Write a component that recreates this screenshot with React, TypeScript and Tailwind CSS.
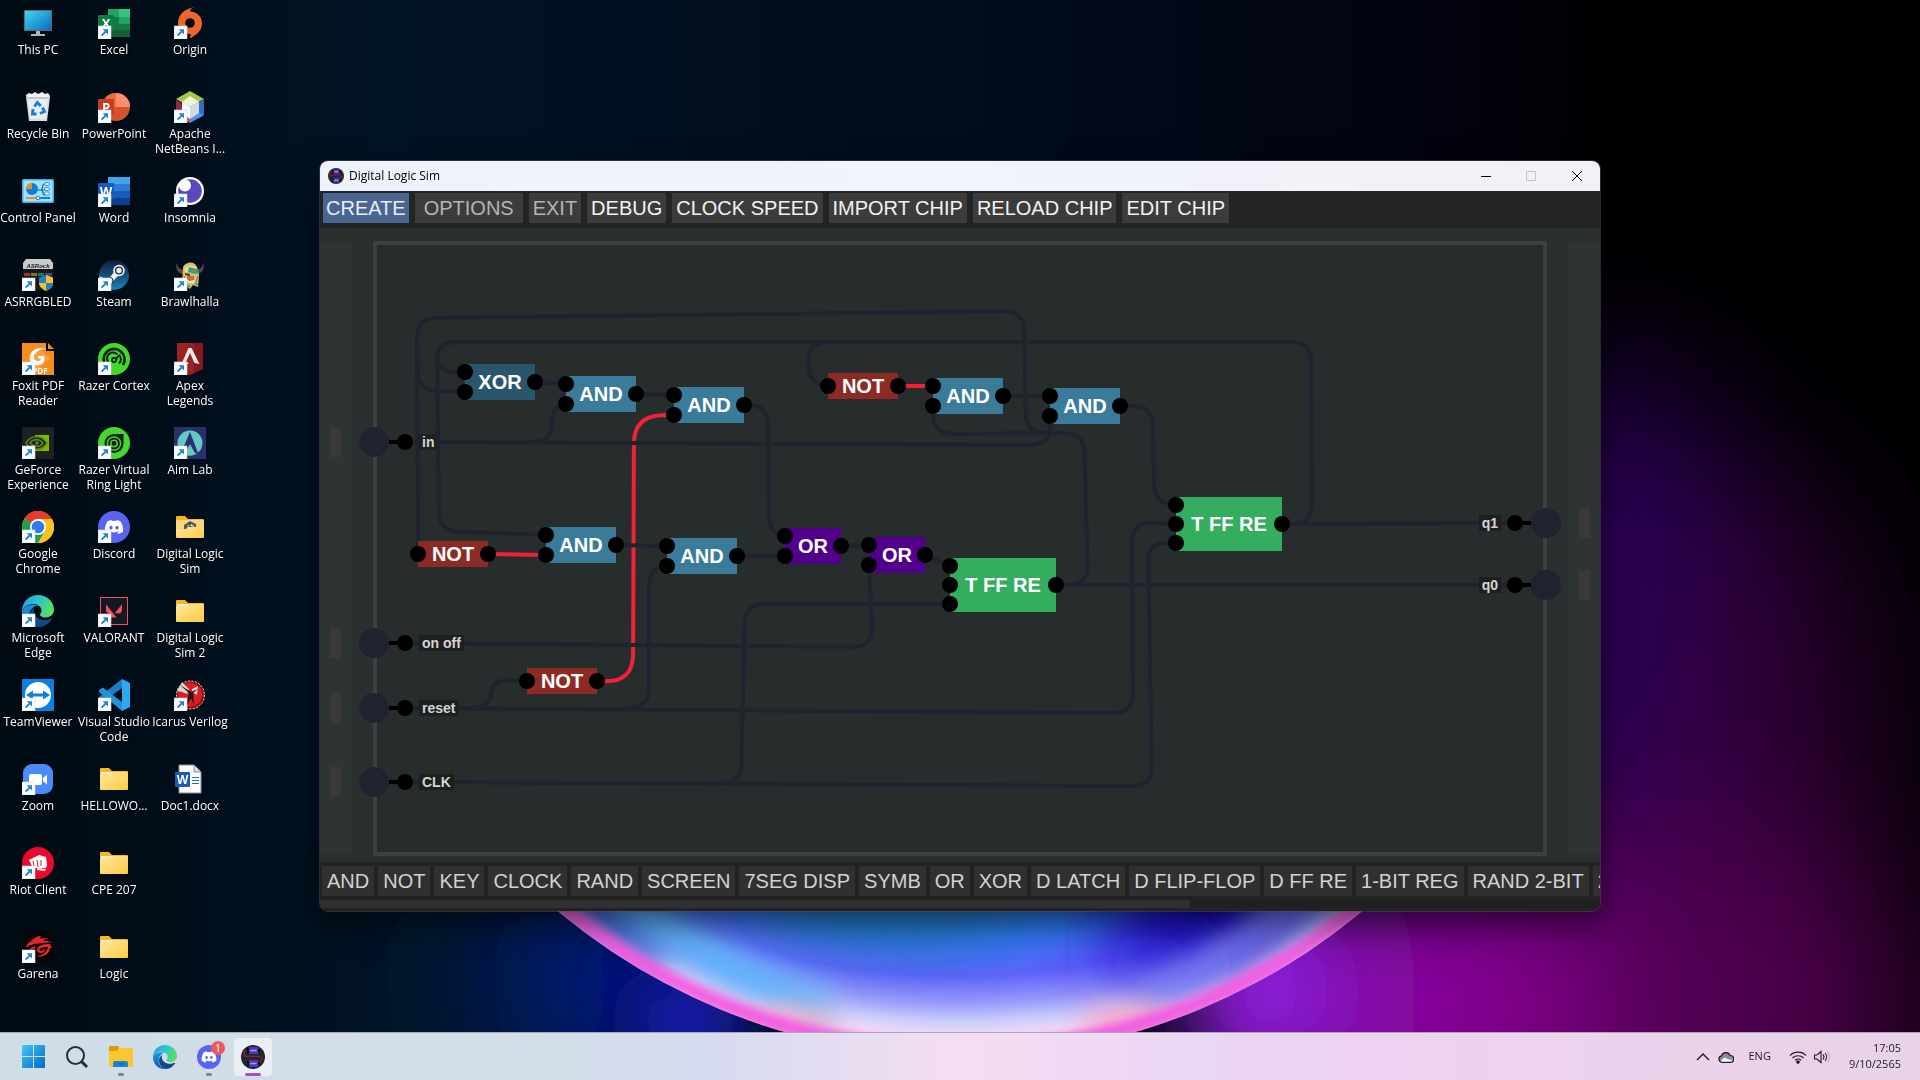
import React from "react";
import type { ReactNode } from "react";
import { FaDiscord } from "react-icons/fa";
import { SiNvidia, SiValorant } from "react-icons/si";

/* ---------- Desktop icons ---------- */

function Glyph({ children, shortcut = true }: { children: ReactNode; shortcut?: boolean }) {
  return (
    <svg viewBox="0 0 32 32" className="size-8" aria-hidden="true">
      {children}
      {shortcut && (
        <g>
          <rect x="0" y="19" width="13" height="13" fill="#fdfdfe" stroke="#cfd8e4" strokeWidth=".6" />
          <path d="M3.6 28.6 L8.4 23.8" stroke="#1b84d6" strokeWidth="1.9" />
          <path d="M4.6 22.2 H10 V27.6 L8.2 25.8 L6.4 24 Z" fill="#1b84d6" />
        </g>
      )}
    </svg>
  );
}

function Letter({ x, y, size = 13, children }: { x: number; y: number; size?: number; children: ReactNode }) {
  return (
    <text x={x} y={y} fontSize={size} fontWeight="700" fill="#fff" textAnchor="middle" fontFamily="Open Sans, sans-serif">
      {children}
    </text>
  );
}

const thisPc = (
  <Glyph shortcut={false}>
    <defs>
      <linearGradient id="pc" x1="0" y1="0" x2="1" y2="1">
        <stop offset="0" stopColor="#3fd8ee" />
        <stop offset="1" stopColor="#0a6cbe" />
      </linearGradient>
    </defs>
    <rect x="2" y="3" width="28" height="21" fill="#5c6770" />
    <rect x="3" y="4" width="26" height="19" fill="url(#pc)" />
    <path d="M14 24h4v3h5v2H9v-2h5z" fill="#aeb6bd" />
  </Glyph>
);

const recycleBin = (
  <Glyph shortcut={false}>
    <path d="M4 4l3-2 3 1 3-2 3 2 4-2 3 2 3-1 2 3-1 4H5z" fill="#f2f3f5" />
    <path d="M4 6h24l-3 24H7z" fill="#d9dce0" />
    <path d="M6 8h20l-2.500 20h-15z" fill="#eceef0" />
    <path d="M4 6h24v2H4z" fill="#c4c8cd" />
    <g fill="none" stroke="#1583d8" strokeWidth="3">
      <path d="M12.500 15.500l2.800-4 3.500 3.500" />
      <path d="M20.500 16.500l2 4-4.500 2" />
      <path d="M14.500 23h-4l.5-5" />
    </g>
  </Glyph>
);

const controlPanel = (
  <Glyph shortcut={false}>
    <rect x="0" y="4" width="32" height="24" rx="1.500" fill="#35b4ee" />
    <rect x="1.500" y="5.500" width="29" height="21" fill="#a5e0fa" />
    <circle cx="10" cy="14" r="6" fill="#0f7fd6" />
    <path d="M10 14V8a6 6 0 0 0-6 6z" fill="#f58b1f" />
    <path d="M16 15h3c2 0 1-6 3-6h2M19 15h4M20 15c1 3 1 5 3 5" stroke="#0b62a8" fill="none" strokeWidth="1.200" />
    <g fill="#e9f7fe" stroke="#0f7fd6" strokeWidth=".8">
      <rect x="22.500" y="7.500" width="5" height="3" rx="1.500" />
      <rect x="22.500" y="12.500" width="5" height="3" rx="1.500" />
      <rect x="22.500" y="17" width="5" height="3" rx="1.500" />
    </g>
    <path d="M4 23h11" stroke="#f58b1f" strokeWidth="2" />
    <path d="M17 23h11" stroke="#0f7fd6" strokeWidth="2" />
    <circle cx="16" cy="23" r="1.700" fill="#fff" stroke="#0f7fd6" />
  </Glyph>
);

const asrock = (
  <Glyph>
    <path d="M4 0h24l3 4v7H1V4z" fill="#c9cbce" />
    <rect x="1" y="10" width="30" height="21" fill="#17181b" />
    <text x="16" y="8.500" fontSize="6" fontWeight="700" fontStyle="italic" fill="#222" textAnchor="middle" fontFamily="Liberation Sans, sans-serif">
      ASRock
    </text>
    <path d="M2 14h6v3H2z" fill="#a2302d" />
    <path d="M9 14h6v3H9z" fill="#7f7a29" />
    <path d="M16 14h6v3h-6z" fill="#2a7a45" />
    <path d="M23 14h7v3h-7z" fill="#2b4fa0" />
    <path d="M24 16l7 2.500v5.500c0 4-4 6.500-7 8z" fill="#f9c21a" />
    <path d="M24 16l-7 2.500v5.500h7z" fill="#1f7fd8" />
    <path d="M17 24h7v8c-3-1.500-7-4-7-8z" fill="#f9c21a" />
    <path d="M24 24h7c0 4-4 6.500-7 8z" fill="#1f7fd8" />
  </Glyph>
);

const foxit = (
  <Glyph>
    <path d="M0 0h24v8h8v24H0z" fill="#f68b1e" />
    <path d="M26 0l6 6h-6z" fill="#f68b1e" />
    <path d="M6 16L16 5l12 10-12 12z" fill="#fa9f45" />
    <path d="M24 6c-8-3-16 1-16 9 0 5 4 8 9 7 5-1 6-5 5-9h-6c0 2 1 3 3 3-1 3-6 3-7-1-1-5 5-9 12-9z" fill="#fff" />
    <Letter x={18} y={30.500} size={8}>PDF</Letter>
  </Glyph>
);

const geforce = (
  <Glyph>
    <rect width="32" height="32" fill="#1f2023" />
    <rect x="13" y="8" width="14" height="16" fill="#76b900" />
    <path d="M4 16c3-5 8-7 13-6 3 .5 6 3 8 6-3 5-8 7-13 6-4-1-6-3-8-6z" fill="#1f2023" />
    <path d="M4 16c3-5 8-7 13-6 3 .5 6 3 8 6-3 5-8 7-13 6-4-1-6-3-8-6z" fill="none" stroke="#5c8a18" strokeWidth="1.500" />
    <path d="M8 16c2-3 5-4 9-3 2 .5 3 2 4 3-2 3-5 4-8 3-2-.5-4-1.500-5-3z" fill="none" stroke="#5c8a18" strokeWidth="1.500" />
    <circle cx="15" cy="16" r="1.800" fill="#5c8a18" />
  </Glyph>
);

const chrome = (
  <Glyph>
    <circle cx="16" cy="16" r="16" fill="#fcc31e" />
    <path d="M16 16L2.100 8A16 16 0 0 1 29.900 8H16z" fill="#e33b2e" />
    <path d="M2.100 8A16 16 0 0 0 16 32l7-12-7-4z" fill="#1f9e4c" />
    <path d="M16 8h13.900A16 16 0 0 1 16 32l7-12z" fill="#fcc31e" />
    <circle cx="16" cy="16" r="8" fill="#fff" />
    <circle cx="16" cy="16" r="6.300" fill="#2f7de9" />
  </Glyph>
);

function EdgeArt() {
  return (
    <g>
      <defs>
        <linearGradient id="edgeTop" x1="0" y1=".3" x2="1" y2=".6">
          <stop offset="0" stopColor="#27a5e6" />
          <stop offset=".5" stopColor="#2fc6c8" />
          <stop offset="1" stopColor="#5fe05a" />
        </linearGradient>
        <linearGradient id="edgeLeft" x1="0" y1="0" x2=".3" y2="1">
          <stop offset="0" stopColor="#1c9ae4" />
          <stop offset="1" stopColor="#0b5cad" />
        </linearGradient>
      </defs>
      <path d="M16 0C25 0 32 7 32 14.500c0 5-4 8-8.500 8-4 0-5.500-1.800-5.500-3 0-1 1.500-1.500 1.500-4C19.500 12 16 9 11.500 9 6 9 1.500 12 0 16 0 7 7 0 16 0z" fill="url(#edgeTop)" />
      <path d="M11 9.500c-6 0-11 4-11 7C0 25 7 32 16 32c-5-1.500-8.500-6-8.500-11.500 0-5 3-8 6-9.500 2-.8 4 .2 4.800 1.500-1.300-2-4-3-7.300-3z" fill="url(#edgeLeft)" />
      <path d="M12.500 13c-3 2-5 5-4.500 9 .8 6 5 10 10 10 5-.5 9-3.500 11.500-7.500.4-.8-.2-1-.8-.7-5.700 2.700-15.200 1-16.700-5.800-.4-2 0-3.800.5-5z" fill="#114a8b" />
    </g>
  );
}

const edge = (
  <Glyph>
    <EdgeArt />
  </Glyph>
);

const teamviewer = (
  <Glyph>
    <rect width="32" height="32" rx="1" fill="#0d7fe0" />
    <circle cx="16" cy="16" r="13" fill="#fff" />
    <path d="M4 16l7-4.500v3h10v-3l7 4.500-7 4.500v-3H11v3z" fill="#0d7fe0" />
  </Glyph>
);

const zoomApp = (
  <Glyph>
    <rect x="1" y="1" width="30" height="30" rx="9" fill="#4a8cf7" />
    <rect x="7" y="11" width="13" height="11" rx="2" fill="#fff" />
    <path d="M21 15l4-3.500v10L21 18z" fill="#fff" />
  </Glyph>
);

const riot = (
  <Glyph>
    <circle cx="16" cy="16" r="16" fill="#eb0a2e" />
    <path d="M7 13l10-5 7 2 1 8-1 3H11l-1-2z" fill="#fff" />
    <path d="M15 21l9 1-1 2-8-1z" fill="#fff" />
    <path d="M11 14l1 5M15 13l1 7M19 13v6" stroke="#eb0a2e" strokeWidth="1" />
  </Glyph>
);

const garena = (
  <Glyph>
    <rect width="32" height="32" rx="1" fill="#070707" />
    <path d="M19 5c-3 0-6 1-7 3l-4 1 3 .5c-4 1.500-7 4-7 7 5-3 9-4 13-4l14-1.500-10-1.500 5-2.500-8 .500z" fill="#e2262d" />
    <path d="M28 13c-6 0-13 1-13 6 0 3 4 4 7 2 1.500-1 1-3-1-3 1 2-3 2.500-3.500 1C17 17 22 16 26 16c-1 4-5 9-12 9 6 2 13-1 14-8h2z" fill="#e2262d" />
    <path d="M13 16c-4 1-6 5-3 8" stroke="#e2262d" strokeWidth="2" fill="none" />
  </Glyph>
);

function Office({ colors, tile, letter }: { colors: string[]; tile: string; letter: string }) {
  return (
    <Glyph>
      <rect x="10" y="2" width="22" height="7" fill={colors[0]} />
      <rect x="10" y="9" width="22" height="7" fill={colors[1]} />
      <rect x="10" y="16" width="22" height="7" fill={colors[2]} />
      <rect x="10" y="23" width="22" height="7" fill={colors[3]} />
      <rect x="0" y="8" width="16" height="16" rx="1" fill={tile} />
      <Letter x={8} y={20.500}>{letter}</Letter>
    </Glyph>
  );
}

const excel = (
  <Glyph>
    <rect x="10" y="2" width="22" height="28" rx="1" fill="#1e7145" />
    <rect x="10" y="2" width="11" height="8" fill="#21a366" />
    <rect x="21" y="2" width="11" height="8" fill="#33c481" />
    <rect x="10" y="10" width="11" height="7" fill="#107c41" />
    <rect x="21" y="10" width="11" height="7" fill="#21a366" />
    <rect x="21" y="17" width="11" height="6" fill="#107c41" />
    <rect x="10" y="23" width="22" height="7" fill="#185c37" />
    <rect x="0" y="8" width="16" height="16" rx="1" fill="#107c41" />
    <Letter x={8} y={20.500}>X</Letter>
  </Glyph>
);

const powerpoint = (
  <Glyph>
    <circle cx="18" cy="16" r="14" fill="#d35230" />
    <path d="M18 2a14 14 0 0 1 14 14H18z" fill="#ff8f6b" />
    <path d="M18 2A14 14 0 0 0 4 16h14z" fill="#ed6c47" />
    <rect x="0" y="8" width="16" height="16" rx="1" fill="#c43e1c" />
    <Letter x={8} y={20.500}>P</Letter>
  </Glyph>
);

const word = <Office colors={["#41a5ee", "#2b7cd3", "#185abd", "#103f91"]} tile="#185abd" letter="W" />;

const steam = (
  <Glyph>
    <defs>
      <linearGradient id="steam" x1="0" y1="0" x2="0" y2="1">
        <stop offset="0" stopColor="#131a3c" />
        <stop offset="1" stopColor="#1487b8" />
      </linearGradient>
    </defs>
    <circle cx="16" cy="16" r="15" fill="url(#steam)" />
    <path d="M1 17l9 4 6-8 4 4-6 6c0 3-3 5-6 4z" fill="#eef0f3" />
    <circle cx="21" cy="11.500" r="5.800" fill="#eef0f3" />
    <circle cx="21" cy="11.500" r="3.400" fill="#eef0f3" stroke="#17284a" strokeWidth="1.300" />
    <circle cx="11" cy="22" r="4" fill="#eef0f3" stroke="#17284a" strokeWidth="1" />
  </Glyph>
);

const cortex = (
  <Glyph>
    <circle cx="16" cy="16" r="16" fill="#43d82c" />
    <path d="M8 23A10.500 10.500 0 1 1 25 22" fill="none" stroke="#0d1f0d" strokeWidth="2.600" />
    <path d="M10.500 19.500a6 6 0 0 1 9-8" fill="none" stroke="#0d1f0d" strokeWidth="2" />
    <path d="M21.500 12.500a6 6 0 0 1-.5 8" fill="none" stroke="#0d1f0d" strokeWidth="2" />
    <circle cx="16" cy="17" r="3" fill="#0d1f0d" />
    <path d="M17 15l6-5-4 7z" fill="#0d1f0d" />
    <circle cx="16" cy="17" r="1.200" fill="#43d82c" />
  </Glyph>
);

const ringLight = (
  <Glyph>
    <circle cx="16" cy="16" r="16" fill="#43d82c" />
    <path d="M16 7h9.500v9.500A9.500 9.500 0 1 1 16 7z" fill="#0f1a10" />
    <circle cx="16" cy="16.500" r="6.600" fill="none" stroke="#43d82c" strokeWidth="1.500" />
    <circle cx="16" cy="16.500" r="3.200" fill="none" stroke="#43d82c" strokeWidth="1.500" />
  </Glyph>
);

const discord = (
  <Glyph>
    <circle cx="16" cy="16" r="16" fill="#5865f2" />
    <FaDiscord x={6} y={6} size={20} color="#fff" />
  </Glyph>
);

const valorant = (
  <Glyph>
    <rect x="2.500" y="2.500" width="27" height="27" fill="#111a24" stroke="#fa4b57" />
    <SiValorant x={8} y={8} size={16} color="#fa4b57" />
  </Glyph>
);

const vscode = (
  <Glyph>
    <path d="M24 0l8 4v24l-8 4z" fill="#2aaaf2" />
    <path d="M24 0v9L5 23l-4-3v-2z" fill="#1b7fc4" />
    <path d="M24 32v-9L5 8.500 1 11v2z" fill="#2292d8" />
  </Glyph>
);

function Folder({ sim = false }: { sim?: boolean }) {
  return (
    <Glyph shortcut={false}>
      <defs>
        <linearGradient id="folder" x1="0" y1="0" x2="1" y2="1">
          <stop offset="0" stopColor="#ffe69b" />
          <stop offset="1" stopColor="#ffcb45" />
        </linearGradient>
      </defs>
      <path d="M2 6a1 1 0 0 1 1-1h8l3 3h15a1 1 0 0 1 1 1v8H2z" fill="#fdb615" />
      <path d="M3 9h26v6H3z" fill="#f3f1ec" />
      {sim ? (
        <g>
          <rect x="2" y="9" width="28" height="10" fill="#fbd67c" />
          <path d="M10 14l6-4 6 3v5H10z" fill="#54575b" />
          <path d="M13 15l4-2 3 2v4h-7z" fill="#e9eaec" />
          <path d="M16 12v6M13 16h6" stroke="#222" />
          <path d="M2 18h10l2-2h16v10a1 1 0 0 1-1 1H3a1 1 0 0 1-1-1z" fill="url(#folder)" />
        </g>
      ) : (
        <path d="M2 11h10l2-2h16v17a1 1 0 0 1-1 1H3a1 1 0 0 1-1-1z" fill="url(#folder)" />
      )}
    </Glyph>
  );
}

const originApp = (
  <Glyph>
    <path d="M20 0c-3 1-4 3-4 4.500 7 0 12 5 12 12C28 24 23 27 17 31c0 0-1 .5-1-.5l1-3.500C9 27.500 4 23 4 16 4 9 8 3 20 0z" fill="#f0652a" />
    <circle cx="16" cy="16" r="4.800" fill="#050a12" />
  </Glyph>
);

const netbeans = (
  <Glyph>
    <path d="M16 0l14 8-14 8L2 8z" fill="#a9c64a" />
    <path d="M2 9l7 4v16l-7-5z" fill="#8f2a4a" />
    <path d="M30 8v16l-6 4V12z" fill="#2f6fc2" />
    <path d="M16 32l14-8-6-3-10 7z" fill="#4b96e2" />
    <path d="M10 26l6 2v4l-6-3z" fill="#d6426b" />
    <path d="M16 5l9 6-9 5-8-5z" fill="#f0f2dc" />
    <path d="M8 11l8 5v12l-8-5z" fill="#fbfbfb" />
    <path d="M25 11v11l-9 6V16z" fill="#d5dae2" />
  </Glyph>
);

const insomnia = (
  <Glyph>
    <circle cx="16" cy="16" r="14" fill="#fff" />
    <circle cx="16" cy="16" r="11.800" fill="#5849be" />
    <circle cx="11" cy="10.500" r="6" fill="#fff" />
  </Glyph>
);

const brawlhalla = (
  <Glyph>
    <path d="M3 3c0 5 2 7 7 8l-1 4C3 14 1 9 3 3zM29 3c0 5-2 7-7 8l1 4c6-1 8-6 6-12z" fill="#574a45" />
    <path d="M9 8c3-6 12-6 14 0l2 8-1 12-5-2-3 4-4-3-4 1z" fill="#d9bd70" />
    <path d="M10 10c3-5 10-5 13 0l-1 3H11z" fill="#e8dc8c" />
    <path d="M15 8l8 2 2 4-4 1-7-2z" fill="#22a884" />
    <circle cx="19" cy="11.500" r="1.500" fill="#d9603a" />
    <path d="M11 14l5 1v2l-5-1z" fill="#4a3526" />
    <path d="M13 17h7v4l-4 1-3-1z" fill="#c66b46" />
    <path d="M13 21l3 1 5-1-1 3h-6z" fill="#f3e6a6" />
    <path d="M13 26l3 2M21 24l3 2" stroke="#22a884" strokeWidth="2" />
    <path d="M10 17l2 6M24 17l-2 6" stroke="#8a6a36" />
  </Glyph>
);

const apex = (
  <Glyph>
    <path d="M3 0h26v26l-13 6-13-4z" fill="#9c2126" />
    <path d="M20 0h9v26l-9 4z" fill="#84191f" />
    <path d="M14.500 5h3l8 16-5-1-4.500-10-4 9 3 1-3 2H7z" fill="#ecebe9" />
  </Glyph>
);

const aimLab = (
  <Glyph>
    <rect width="32" height="32" fill="#29306c" />
    <circle cx="16" cy="16" r="12.500" fill="#62c9c4" />
    <path d="M16 5l8 21h-3l-5-8-5 8H7z" fill="#29306c" />
    <path d="M16 17l5 10c-3 2-7 2-10 0z" fill="#62c9c4" />
  </Glyph>
);

const icarus = (
  <Glyph>
    <circle cx="16.500" cy="16" r="14" fill="#8e1015" stroke="#f5e8e8" strokeDasharray="2 1.500" />
    <circle cx="16" cy="15.500" r="12" fill="#dd1d22" />
    <path d="M3 12l5-9 7 7-2 5-5-2zM18 10l6-3-1 9-5-3z" fill="#d4d4d4" />
    <path d="M6 6l9 8-3 14 5-9 3 7-1-12 5-4-7 3z" fill="#1b1616" />
  </Glyph>
);

const docx = (
  <Glyph shortcut={false}>
    <path d="M5 2h15l7 7v21H5z" fill="#fbfbfb" stroke="#8b9096" />
    <path d="M20 2v7h7" fill="#d8dce0" stroke="#8b9096" />
    <path d="M18 14.500h7M18 17.500h7M18 20.500h7" stroke="#2b6cc4" />
    <rect x="1" y="9" width="15" height="15" rx="1" fill="#185abd" />
    <Letter x={8.5} y={21} size={12}>W</Letter>
  </Glyph>
);

type DesktopItem = { lines: string[]; icon: ReactNode };

const columns: DesktopItem[][] = [
  [
    { lines: ["This PC"], icon: thisPc },
    { lines: ["Recycle Bin"], icon: recycleBin },
    { lines: ["Control Panel"], icon: controlPanel },
    { lines: ["ASRRGBLED"], icon: asrock },
    { lines: ["Foxit PDF", "Reader"], icon: foxit },
    { lines: ["GeForce", "Experience"], icon: geforce },
    { lines: ["Google", "Chrome"], icon: chrome },
    { lines: ["Microsoft", "Edge"], icon: edge },
    { lines: ["TeamViewer"], icon: teamviewer },
    { lines: ["Zoom"], icon: zoomApp },
    { lines: ["Riot Client"], icon: riot },
    { lines: ["Garena"], icon: garena },
  ],
  [
    { lines: ["Excel"], icon: excel },
    { lines: ["PowerPoint"], icon: powerpoint },
    { lines: ["Word"], icon: word },
    { lines: ["Steam"], icon: steam },
    { lines: ["Razer Cortex"], icon: cortex },
    { lines: ["Razer Virtual", "Ring Light"], icon: ringLight },
    { lines: ["Discord"], icon: discord },
    { lines: ["VALORANT"], icon: valorant },
    { lines: ["Visual Studio", "Code"], icon: vscode },
    { lines: ["HELLOWO..."], icon: <Folder /> },
    { lines: ["CPE 207"], icon: <Folder /> },
    { lines: ["Logic"], icon: <Folder /> },
  ],
  [
    { lines: ["Origin"], icon: originApp },
    { lines: ["Apache", "NetBeans I..."], icon: netbeans },
    { lines: ["Insomnia"], icon: insomnia },
    { lines: ["Brawlhalla"], icon: brawlhalla },
    { lines: ["Apex", "Legends"], icon: apex },
    { lines: ["Aim Lab"], icon: aimLab },
    { lines: ["Digital Logic", "Sim"], icon: <Folder sim /> },
    { lines: ["Digital Logic", "Sim 2"], icon: <Folder /> },
    { lines: ["Icarus Verilog"], icon: icarus },
    { lines: ["Doc1.docx"], icon: docx },
  ],
];

function DesktopIcons() {
  return (
    <div className="relative flex">
      {columns.map((items, c) => (
        <div key={c} className="flex w-19 flex-col">
          {items.map((item) => (
            <button key={item.lines.join(" ")} type="button" className="flex h-21 flex-col items-center pt-[7px] text-white">
              {item.icon}
              <span className="mt-[3px] flex flex-col items-center text-[12px] leading-[15px] whitespace-nowrap [text-shadow:1px_1px_2px_#000]">
                {item.lines.map((line) => (
                  <span key={line}>{line}</span>
                ))}
              </span>
            </button>
          ))}
        </div>
      ))}
    </div>
  );
}

/* ---------- Wallpaper ---------- */

function Wallpaper() {
  return (
    <svg viewBox="0 0 1920 1080" preserveAspectRatio="xMidYMid slice" className="absolute inset-0 size-full" aria-hidden="true">
      <defs>
        <filter id="haze" filterUnits="userSpaceOnUse" x="-300" y="-300" width="2600" height="1700"><feGaussianBlur stdDeviation="75" /></filter>
        <filter id="glow" filterUnits="userSpaceOnUse" x="-300" y="-300" width="2600" height="1700"><feGaussianBlur stdDeviation="32" /></filter>
        <filter id="soft" filterUnits="userSpaceOnUse" x="-300" y="-300" width="2600" height="1700"><feGaussianBlur stdDeviation="14" /></filter>
        <filter id="rim" filterUnits="userSpaceOnUse" x="-300" y="-300" width="2600" height="1700"><feGaussianBlur stdDeviation="5" /></filter>
        <linearGradient id="base" x1="0" y1="0" x2="1" y2="0">
          <stop offset="0" stopColor="#000a12" />
          <stop offset=".2" stopColor="#011424" />
          <stop offset=".55" stopColor="#010a1a" />
          <stop offset=".75" stopColor="#030310" />
          <stop offset=".85" stopColor="#000" />
          <stop offset="1" stopColor="#000" />
        </linearGradient>
        <radialGradient id="ring" gradientUnits="userSpaceOnUse" cx="960" cy="250" r="807">
          <stop offset=".78" stopColor="#1a70b4" />
          <stop offset=".85" stopColor="#2f78f0" />
          <stop offset=".9" stopColor="#5f64fa" />
          <stop offset=".935" stopColor="#9c9efb" />
          <stop offset=".955" stopColor="#c8ccfb" />
          <stop offset=".975" stopColor="#f6dcf6" />
          <stop offset="1" stopColor="#ffb0d8" />
        </radialGradient>
        <clipPath id="disc"><circle cx="960" cy="429" r="628" /></clipPath>
        <clipPath id="lower"><rect x="0" y="600" width="1920" height="480" /></clipPath>
      </defs>
      <rect width="1920" height="1080" fill="url(#base)" />
      <g filter="url(#haze)">
        <ellipse cx="1600" cy="760" rx="170" ry="400" fill="#36006a" opacity=".8" />
        <ellipse cx="1760" cy="800" rx="120" ry="330" fill="#320038" opacity=".8" />
        <ellipse cx="1660" cy="1020" rx="260" ry="190" fill="#520050" opacity=".9" />
        <ellipse cx="1440" cy="1010" rx="150" ry="130" fill="#8c0496" />
        <ellipse cx="1290" cy="1000" rx="80" ry="140" fill="#9a14d8" />
        <ellipse cx="640" cy="980" rx="60" ry="100" fill="#0018c0" />
        <ellipse cx="520" cy="980" rx="60" ry="90" fill="#00225c" />
      </g>
      <g filter="url(#glow)">
        <ellipse cx="690" cy="1020" rx="50" ry="50" fill="#1c1eb8" />
        <ellipse cx="1270" cy="990" rx="60" ry="70" fill="#8a1ad4" />
      </g>
      <g clipPath="url(#lower)">
        <g clipPath="url(#disc)">
          <circle cx="960" cy="429" r="628" fill="url(#ring)" />
          <g filter="url(#glow)">
            <ellipse cx="1200" cy="905" rx="90" ry="60" fill="#0a04a8" />
            <ellipse cx="1150" cy="960" rx="70" ry="22" fill="#3420e4" />
            <ellipse cx="880" cy="900" rx="130" ry="36" fill="#1a74ac" />
            <ellipse cx="640" cy="880" rx="60" ry="40" fill="#045098" />
          </g>
          <g filter="url(#soft)" fill="none">
            <path d="M610 880A590 590 0 0 0 830 1010" stroke="#5cb4fa" strokeWidth="36" />
            <path d="M1310 880A560 560 0 0 1 1140 1000" stroke="#7a80f4" strokeWidth="24" />
            <path d="M560 860A600 600 0 0 0 660 968" stroke="#1408c8" strokeWidth="16" />
          </g>
          <g filter="url(#soft)">
            <ellipse cx="790" cy="1022" rx="50" ry="14" fill="#ffb4c4" />
            <ellipse cx="1130" cy="1022" rx="50" ry="14" fill="#ffa8bc" />
          </g>
          <circle cx="960" cy="429" r="622" fill="none" stroke="#f25ce2" strokeWidth="16" filter="url(#rim)" />
        </g>
      </g>
    </svg>
  );
}

/* ---------- Circuit ---------- */

type Point = [number, number];

function roundedPath(points: Point[], radius = 20): string {
  let d = `M${points[0][0]} ${points[0][1]}`;
  for (let i = 1; i < points.length - 1; i++) {
    const [px, py] = points[i - 1];
    const [x, y] = points[i];
    const [nx, ny] = points[i + 1];
    const a = Math.hypot(x - px, y - py);
    const b = Math.hypot(nx - x, ny - y);
    const ra = Math.min(radius, a / (i === 1 ? 1 : 2));
    const rb = Math.min(radius, b / (i === points.length - 2 ? 1 : 2));
    d += ` L${x - ((x - px) / a) * ra} ${y - ((y - py) / a) * ra} Q${x} ${y} ${x + ((nx - x) / b) * rb} ${y + ((ny - y) / b) * rb}`;
  }
  const [lx, ly] = points[points.length - 1];
  return `${d} L${lx} ${ly}`;
}

const liveWires: Point[][] = [
  [[168, 326], [226, 327]],
  [[578, 158], [613, 158]],
  [[277, 453], [313, 454], [314, 188], [354, 187]],
];

const idleWires: Point[][] = [
  [[736, 357], [768, 357], [764, 205], [706, 205], [704, 83], [97, 90], [98, 326]],
  [[97, 110], [98, 163], [145, 163]],
  [[962, 296], [992, 296], [991, 114], [117, 114], [117, 144], [145, 144]],
  [[140, 114], [117, 114], [119, 303], [226, 307]],
  [[530, 114], [488, 114], [489, 157], [508, 158]],
  [[85, 214], [730, 217], [730, 188]],
  [[205, 214], [232, 214], [232, 177], [246, 176]],
  [[613, 178], [613, 206], [730, 205]],
  [[85, 415], [553, 419], [549, 337]],
  [[85, 480], [813, 485], [812, 294], [856, 296]],
  [[150, 480], [170, 480], [172, 451], [207, 453]],
  [[305, 480], [329, 480], [329, 338], [347, 338]],
  [[85, 554], [832, 558], [828, 314], [856, 315]],
  [[395, 555], [421, 555], [425, 376], [630, 376]],
  [[424, 177], [448, 177], [449, 307], [465, 308]],
  [[800, 178], [833, 178], [834, 276], [856, 277]],
  [[215, 154], [246, 156]],
  [[316, 166], [354, 167]],
  [[683, 168], [730, 168]],
  [[296, 317], [347, 318]],
  [[417, 328], [465, 328]],
  [[521, 318], [549, 317]],
  [[605, 327], [630, 338]],
  [[962, 296], [1195, 295]],
  [[736, 357], [1195, 357]],
];

type Chip = { name: string; kind: string; x: number; y: number; ins: number[]; out: number };

const chipStyle: Record<string, string> = {
  xor: "h-9 w-[70px] bg-[#29566b]",
  and: "h-9 w-[70px] bg-[#3a7b99]",
  not: "h-[26px] w-[70px] bg-[#8c2b26]",
  or: "h-9 w-14 bg-[#52008c]",
  tff: "h-[54px] w-[106px] bg-[#34ad5f]",
};

const chips: Chip[] = [
  { name: "XOR", kind: "xor", x: 145, y: 136, ins: [8, 28], out: 18 },
  { name: "AND", kind: "and", x: 246, y: 148, ins: [8, 28], out: 18 },
  { name: "AND", kind: "and", x: 354, y: 159, ins: [8, 28], out: 18 },
  { name: "NOT", kind: "not", x: 508, y: 145, ins: [13], out: 13 },
  { name: "AND", kind: "and", x: 613, y: 150, ins: [8, 28], out: 18 },
  { name: "AND", kind: "and", x: 730, y: 160, ins: [8, 28], out: 18 },
  { name: "NOT", kind: "not", x: 98, y: 313, ins: [13], out: 13 },
  { name: "AND", kind: "and", x: 226, y: 299, ins: [8, 28], out: 18 },
  { name: "AND", kind: "and", x: 347, y: 310, ins: [8, 28], out: 18 },
  { name: "OR", kind: "or", x: 465, y: 300, ins: [8, 28], out: 18 },
  { name: "OR", kind: "or", x: 549, y: 309, ins: [8, 28], out: 18 },
  { name: "T FF RE", kind: "tff", x: 630, y: 330, ins: [8, 27, 46], out: 27 },
  { name: "T FF RE", kind: "tff", x: 856, y: 269, ins: [8, 27, 46], out: 27 },
  { name: "NOT", kind: "not", x: 207, y: 440, ins: [13], out: 13 },
];

function ChipNode({ chip }: { chip: Chip }) {
  return (
    <div
      className={`absolute flex items-center justify-center text-[20px] leading-none font-bold whitespace-nowrap text-white ${chipStyle[chip.kind]}`}
      style={{ left: chip.x, top: chip.y }}
    >
      {chip.name}
      {chip.ins.map((y) => (
        <span key={y} className="absolute -left-2 size-4 -translate-y-1/2 rounded-full bg-black" style={{ top: y }} />
      ))}
      <span className="absolute -right-2 size-4 -translate-y-1/2 rounded-full bg-black" style={{ top: chip.out }} />
    </div>
  );
}

function Terminal({ name, y, side }: { name: string; y: number; side: "in" | "out" }) {
  const row = side === "in" ? "left-[10px] flex-row" : "right-[10px] flex-row-reverse";
  return (
    <div className={`absolute flex -translate-y-1/2 items-center ${row}`} style={{ top: y }}>
      <span className="h-[30px] w-[11px] bg-[#3a3838]" />
      <span className="mx-[18px] size-[30px] rounded-full bg-[#20232f]" />
      <span className={side === "in" ? "-ml-[18px] h-1 w-2 bg-black" : "-mr-[18px] h-1 w-2 bg-black"} />
      <span className="size-4 rounded-full bg-black" />
      <span className="mx-[6px] bg-[#1e2020] px-[3px] text-[14px] leading-4 font-bold whitespace-nowrap text-[#d4d4d4]">{name}</span>
    </div>
  );
}

function Workspace() {
  return (
    <main className="relative flex flex-1 gap-[21px] bg-[#2a302f] pt-[13px] pb-[6px]">
      <div className="mt-0.5 mb-0.5 w-8 bg-[#2e3434]" />
      <div className="flex-1 border-4 border-[#3b4140] bg-[#272c2c]" />
      <div className="mt-0.5 mb-0.5 w-8 bg-[#2e3434]" />
      <svg className="absolute inset-0 size-full" fill="none" strokeWidth="4" aria-hidden="true">
        {liveWires.map((w, i) => (
          <path key={i} d={roundedPath(w, 28)} stroke="#f02238" />
        ))}
        {idleWires.map((w, i) => (
          <path key={i} d={roundedPath(w)} stroke="#20232f" />
        ))}
      </svg>
      {chips.map((chip) => (
        <ChipNode key={`${chip.x}-${chip.y}`} chip={chip} />
      ))}
      <Terminal name="in" y={214} side="in" />
      <Terminal name="on off" y={415} side="in" />
      <Terminal name="reset" y={480} side="in" />
      <Terminal name="CLK" y={554} side="in" />
      <Terminal name="q1" y={295} side="out" />
      <Terminal name="q0" y={357} side="out" />
    </main>
  );
}

/* ---------- Application window ---------- */

function SimIcon({ className }: { className: string }) {
  return (
    <svg viewBox="0 0 24 24" className={className} aria-hidden="true">
      <circle cx="12" cy="12" r="12" fill="#25252a" />
      <path d="M5 6H3v5c4 1 17-1 18 2 .5 2-2 5-5 5" fill="none" stroke="#b3202f" />
      <rect x="8" y="2" width="9" height="7" fill="#4a35c0" />
      <rect x="8" y="15" width="9" height="7" fill="#4a35c0" />
      <path d="M9.500 5.500h6M9.500 18.500h6" stroke="#a9a4ea" strokeWidth="1.500" />
      <path d="M7 3v2M7 6.500v2M18 4.500v2M7 16v2M7 19.500v2M18 17.500v2" stroke="#000" strokeWidth="2" />
    </svg>
  );
}

const menu = [
  { label: "CREATE", style: "bg-[#4a6590] px-[3px] text-[#e8ecf4]" },
  { label: "OPTIONS", style: "bg-[#3c3c3c] px-[9px] text-[#b4b4b4]" },
  { label: "EXIT", style: "bg-[#3c3c3c] px-1 text-[#b4b4b4]" },
  { label: "DEBUG", style: "bg-[#3c3c3c] px-1 text-[#f2f2f2]" },
  { label: "CLOCK SPEED", style: "bg-[#3c3c3c] px-1 text-[#f2f2f2]" },
  { label: "IMPORT CHIP", style: "bg-[#3c3c3c] px-1 text-[#f2f2f2]" },
  { label: "RELOAD CHIP", style: "bg-[#3c3c3c] px-1 text-[#f2f2f2]" },
  { label: "EDIT CHIP", style: "bg-[#3c3c3c] px-1 text-[#f2f2f2]" },
];

const palette = [
  "AND", "NOT", "KEY", "CLOCK", "RAND", "SCREEN", "7SEG DISP", "SYMB", "OR", "XOR",
  "D LATCH", "D FLIP-FLOP", "D FF RE", "1-BIT REG", "RAND 2-BIT", "2",
];

function SimWindow() {
  return (
    <section
      aria-label="Digital Logic Sim"
      className="absolute top-[161px] left-1/2 flex h-[750px] w-2/3 -translate-x-1/2 flex-col overflow-hidden rounded-lg bg-[#222] shadow-[0_0_0_1px_#55505c80,0_12px_32px_#00000090]"
    >
      <header className="flex h-[30px] items-center bg-linear-to-r from-[#eef3fb] via-[#f0f4fb] to-[#f3f0f7] pl-2 text-[12px] text-black">
        <SimIcon className="size-4" />
        <h1 className="ml-[5px] flex-1 text-[12px]">Digital Logic Sim</h1>
        <button type="button" aria-label="Minimize" className="flex w-[45px] justify-center">
          <svg viewBox="0 0 10 10" className="size-[10px]" stroke="#000"><path d="M0 5.500h10" /></svg>
        </button>
        <button type="button" aria-label="Maximize" disabled className="flex w-[45px] justify-center">
          <svg viewBox="0 0 10 10" className="size-[10px]" fill="none" stroke="#c3c3c8"><rect x=".5" y=".5" width="9" height="9" rx=".5" /></svg>
        </button>
        <button type="button" aria-label="Close" className="flex w-[46px] justify-center">
          <svg viewBox="0 0 10 10" className="size-[10px]" stroke="#000"><path d="M0 0l10 10M10 0L0 10" /></svg>
        </button>
      </header>
      <div className="flex flex-1 flex-col font-['Liberation_Sans',Arial,sans-serif]">
        <nav className="flex h-[37px] items-start gap-[6px] bg-[#232524] px-[3px] pt-0.5">
          {menu.map((m) => (
            <button key={m.label} type="button" className={`h-[30px] text-[20px] leading-[30px] whitespace-nowrap ${m.style}`}>
              {m.label}
            </button>
          ))}
        </nav>
        <Workspace />
        <div className="flex flex-col bg-[#222] pt-1 pb-[3px]">
          <div className="flex gap-1 overflow-hidden pl-0.5">
            {palette.map((p) => (
              <button key={p} type="button" className="h-[30px] shrink-0 bg-[#303030] px-[5px] text-[20px] leading-[30px] whitespace-nowrap text-[#d2d2d2]">
                {p}
              </button>
            ))}
          </div>
          <div className="mt-1 h-2 bg-[#202020]">
            <div className="h-full w-[68%] bg-[#303030]" />
          </div>
        </div>
      </div>
    </section>
  );
}

/* ---------- Taskbar ---------- */

function TaskButton({ label, children, active = false, running = false }: { label: string; children: ReactNode; active?: boolean; running?: boolean }) {
  return (
    <button
      type="button"
      aria-label={label}
      className={`relative flex size-[38px] items-center justify-center rounded ${active ? "bg-[#e9eff5]" : ""}`}
    >
      {children}
      {running && !active && <span className="absolute bottom-0 h-[3px] w-[6px] rounded-full bg-[#7b8288]" />}
      {active && <span className="absolute bottom-0 h-[3px] w-4 rounded-full bg-[#ad4cc3]" />}
    </button>
  );
}

function Taskbar() {
  return (
    <footer className="relative flex h-12 items-center justify-between border-t border-[#a9a9b4] bg-[linear-gradient(90deg,#cfdde6_0%,#d3dee8_28%,#d6dbef_37%,#f5def3_50%,#ebd6f5_62%,#eed2f1_72%,#e8d3e7_100%)] text-[#1c1a20]">
      <div className="flex items-center gap-[6px] pl-[14px]">
        <TaskButton label="Start">
          <svg viewBox="0 0 23 23" className="size-[23px]">
            <defs>
              <linearGradient id="win" x1="0" y1="0" x2="1" y2="1">
                <stop offset="0" stopColor="#45c8f5" />
                <stop offset="1" stopColor="#0068c4" />
              </linearGradient>
            </defs>
            <path d="M1 0h10v11H0V1a1 1 0 0 1 1-1zM12 0h10a1 1 0 0 1 1 1v10H12zM0 12h11v11H1a1 1 0 0 1-1-1zM12 12h11v10a1 1 0 0 1-1 1H12z" fill="url(#win)" />
          </svg>
        </TaskButton>
        <TaskButton label="Search">
          <svg viewBox="0 0 24 24" className="size-6" fill="none" stroke="#2a2d30">
            <circle cx="10.500" cy="10.500" r="8.500" strokeWidth="2" />
            <path d="M16.500 16.500l5.500 5.500" strokeWidth="3" />
          </svg>
        </TaskButton>
        <TaskButton label="File Explorer" running>
          <svg viewBox="0 0 24 24" className="size-6">
            <path d="M0 2a1 1 0 0 1 1-1h8l2 3h-1l-1 2H0z" fill="#d99a0c" />
            <path d="M0 6h8l2-3h13a1 1 0 0 1 1 1v18H0z" fill="#fdc62f" />
            <path d="M4 22v-4a2 2 0 0 1 2-2h11a2 2 0 0 1 2 2v4z" fill="#1487d8" />
            <path d="M8 19h7" stroke="#0b6cb8" strokeWidth="1.500" />
          </svg>
        </TaskButton>
        <TaskButton label="Microsoft Edge">
          <svg viewBox="0 0 32 32" className="size-6"><EdgeArt /></svg>
        </TaskButton>
        <TaskButton label="Discord" running>
          <span className="flex size-6 items-center justify-center rounded-full bg-[#5865f2] text-white"><FaDiscord size={16} /></span>
          <span className="absolute top-[3px] right-[3px] flex size-[14px] items-center justify-center rounded-full bg-[#f0595c] text-[11px] leading-none text-white">1</span>
        </TaskButton>
        <TaskButton label="Digital Logic Sim" active>
          <SimIcon className="size-6" />
        </TaskButton>
      </div>
      <div className="flex items-center pr-[19px] text-[11px]">
        <svg viewBox="0 0 14 8" className="h-2 w-[14px]" fill="none" stroke="currentColor" strokeWidth="1.400" aria-label="Show hidden icons"><path d="M1 7l6-6 6 6" /></svg>
        <svg viewBox="0 0 16 12" className="ml-2 h-3 w-4" aria-label="OneDrive">
          <path d="M4 11.300a3.300 3.300 0 0 1-.5-6.500A4.600 4.600 0 0 1 12.200 4.500a3.400 3.400 0 0 1 .3 6.800z" fill="#8b8a90" stroke="#1c1a20" strokeWidth="1.200" />
          <path d="M3 10.500c1-4 5-5 6.500-2.500l5 1c-.5 1.300-1 1.700-2 1.700H4z" fill="#f3eef4" />
        </svg>
        <span className="ml-[14px]">ENG</span>
        <svg viewBox="0 0 18 14" className="ml-[18px] h-[14px] w-[18px]" fill="none" stroke="currentColor" strokeWidth="1.200" aria-label="Wi-Fi">
          <path d="M1 5.500a11.300 11.300 0 0 1 16 0M3.500 8a7.800 7.800 0 0 1 11 0M6 10.300a4.300 4.300 0 0 1 6 0" />
          <circle cx="9" cy="12" r="1.200" fill="currentColor" />
        </svg>
        <svg viewBox="0 0 18 14" className="ml-[6px] h-[14px] w-[18px]" fill="none" stroke="currentColor" strokeWidth="1.100" aria-label="Volume">
          <path d="M1.500 5h2.500l4-3.500v11L4 9H1.500z" />
          <path d="M10 4.500a4 4 0 0 1 0 5M12 3a6 6 0 0 1 0 8" />
          <path d="M14.500 1.500a9 9 0 0 1 0 11" stroke="#b5a5b8" />
        </svg>
        <div className="ml-[18px] flex flex-col items-end pb-0.5 leading-4">
          <span>17:05</span>
          <span>9/10/2565</span>
        </div>
      </div>
    </footer>
  );
}

export default function App() {
  return (
    <div className="relative flex min-h-screen flex-col overflow-hidden bg-black font-['Open_Sans','Noto_Sans',sans-serif]">
      <Wallpaper />
      <div className="relative flex-1">
        <DesktopIcons />
        <SimWindow />
      </div>
      <Taskbar />
    </div>
  );
}
